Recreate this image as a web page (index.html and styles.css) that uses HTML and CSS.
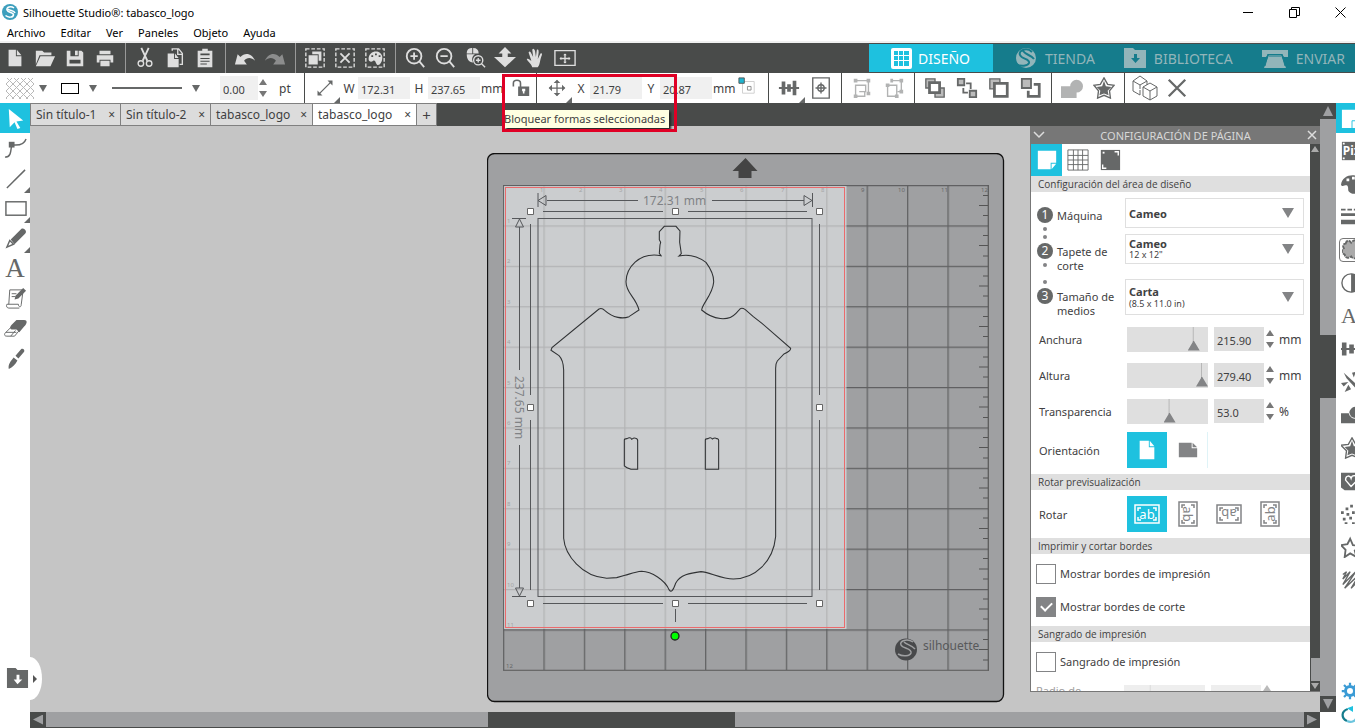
FILE: index.html
```html
<!DOCTYPE html>
<html lang="es">
<head>
    <meta charset="UTF-8">
    <meta name="viewport" content="width=device-width, initial-scale=1.0">
    <title>Silhouette Studio®: tabasco_logo</title>
    <link rel="stylesheet" href="styles.css">
</head>
<body>
    <header class="titlebar">
        <svg class="app-icon" viewBox="0 0 16 16"><circle cx="8" cy="8" r="8" fill="#3d9fbd"/><path d="M12 4C9 1.500 4 3 5 6s7 2 6.500 5c-.5 2.500-5 3-8 .5M6 5c2 2 6 1 7 4" fill="none" stroke="#fff" stroke-width="1.500"/></svg>
        <span class="app-title">Silhouette Studio®: tabasco_logo</span>
        <div class="window-buttons">
            <button aria-label="Minimizar"><svg viewBox="0 0 11 11"><path d="M0 5.500h10"/></svg></button>
            <button aria-label="Restaurar"><svg viewBox="0 0 11 11"><path d="M.5 2.500h7v8h-7zM2.500 2.500v-2h8v8h-3"/></svg></button>
            <button aria-label="Cerrar"><svg viewBox="0 0 11 11"><path d="M.5.500l10 10M10.500.500l-10 10"/></svg></button>
        </div>
    </header>

    <nav class="menubar">
        <a href="#">Archivo</a>
        <a href="#">Editar</a>
        <a href="#">Ver</a>
        <a href="#">Paneles</a>
        <a href="#">Objeto</a>
        <a href="#">Ayuda</a>
    </nav>

    <div class="toolbar">
        <div class="tool-group">
            <button aria-label="Nuevo"><svg viewBox="0 0 24 24"><path class="f" d="M5 3h8v7h6v11H5zM14 3l5 6h-5z"/></svg></button>
            <button aria-label="Abrir"><svg viewBox="0 0 24 24"><path class="f" d="M2 4h7l2 2h8v3H6L2 19zM7 10h16l-5 11H2z"/></svg></button>
            <button aria-label="Guardar"><svg viewBox="0 0 24 24"><path class="f" fill-rule="evenodd" d="M3 4h4v6h9V4h3l2 2v15H3zM6 14v4h12v-4z"/><path class="f" d="M12 4h3v5h-3z"/></svg></button>
            <button aria-label="Imprimir"><svg viewBox="0 0 24 24"><path class="f" d="M6 4h12v4H6zM3 9h18v8h-3v-3H6v3H3zM7 15h10v6H7z"/></svg></button>
        </div>
        <div class="tool-group">
            <button aria-label="Cortar"><svg viewBox="0 0 24 24"><path class="s" d="M8 1l6.500 14M16 1L9.500 15" stroke-width="2"/><circle class="s" cx="7.500" cy="18" r="3" stroke-width="1.500"/><circle class="s" cx="16.500" cy="18" r="3" stroke-width="1.500"/></svg></button>
            <button aria-label="Copiar"><svg viewBox="0 0 24 24"><path class="f" d="M4 7h7v6h5v9H4zM12 7l4 5h-4z"/><path class="s" d="M9 4V2h7l4 5v12h-3M15 2v6h5" stroke-width="1.500"/></svg></button>
            <button aria-label="Pegar"><svg viewBox="0 0 24 24"><path class="f" fill-rule="evenodd" d="M4 4h5V2h6v2h5v18H4zM7 7v2h10V7zM7 12v1h10v-1zM7 15v1h10v-1zM7 18v1h7v-1z"/></svg></button>
        </div>
        <div class="tool-group">
            <button aria-label="Deshacer"><svg viewBox="0 0 24 24"><path class="f" d="M1 19L4 8l3 3c5-6 13-4 16 4-4-4-9-4-12 0l3 4z"/></svg></button>
            <button class="dim" aria-label="Rehacer"><svg viewBox="0 0 24 24"><path class="f" d="M23 19L20 8l-3 3C12 5 4 7 1 15c4-4 9-4 12 0l-3 4z"/></svg></button>
        </div>
        <div class="tool-group">
            <button aria-label="Seleccionar todo"><svg viewBox="0 0 24 24"><rect class="s" x="2" y="2" width="20" height="20" stroke-width="1.500" stroke-dasharray="4 2"/><path class="f" d="M9 5h10v10h-3V8H9zM5 9h10v10H5z"/></svg></button>
            <button aria-label="Deseleccionar"><svg viewBox="0 0 24 24"><rect class="s" x="2" y="2" width="20" height="20" stroke-width="1.500" stroke-dasharray="4 2"/><path class="s" d="M7 7l10 10M17 7L7 17" stroke-width="2"/></svg></button>
            <button aria-label="Seleccionar por color"><svg viewBox="0 0 24 24"><rect class="s" x="2" y="2" width="20" height="20" stroke-width="1.500" stroke-dasharray="4 2"/><path class="f" d="M5 13c0-10 14-11 15-2 0 7-4 10-6 8s-1-5-4-4c-2 2-5 1-5-2z"/><path d="M8 9h2v2H8zM12 7h2v2h-2zM16 9h2v2h-2z" fill="#494b4a"/></svg></button>
        </div>
        <div class="tool-group">
            <button aria-label="Acercar"><svg viewBox="0 0 24 24"><circle class="s" cx="11" cy="10" r="8" stroke-width="2"/><path class="s" d="M7 10h8M11 6v8M17 16l5 6" stroke-width="2"/></svg></button>
            <button aria-label="Alejar"><svg viewBox="0 0 24 24"><circle class="s" cx="11" cy="10" r="8" stroke-width="2"/><path class="s" d="M7 10h8M17 16l5 6" stroke-width="2"/></svg></button>
            <button aria-label="Zoom de selección"><svg viewBox="0 0 24 24"><path class="f" d="M3 7c0-5 3-6 6-6v6zM10 1c4 0 6 2 6 6h-6zM3 8h9c-3 2-4 5-2 9-5 0-7-4-7-9z"/><circle class="s" cx="15.500" cy="14.500" r="5" stroke-width="1.500"/><path class="s" d="M13 14.500h5M15.500 12v5M19 18l4 4" stroke-width="1.500"/></svg></button>
            <button aria-label="Arrastrar zoom"><svg viewBox="0 0 24 24"><path class="f" d="M12 0l7 7h-4v4h9L12 22 0 11h9V7H5z"/></svg></button>
            <button aria-label="Mano"><svg viewBox="0 0 24 24"><path class="f" d="M9 22c-1-4-5-6-6-9 2-1 3 1 5 2L5 6c1-2 2-1 3 1l2 4-1-8c1-2 2-1 3 1l1 7 1-8c2-1 2 1 2 3l-1 7 3-6c2-1 2 1 1 3-2 5-1 8-4 12z"/></svg></button>
            <button aria-label="Ajustar a ventana"><svg viewBox="0 0 24 24"><path class="s" d="M1 4h22v16H1zM7 12.500h10M12 7.500v10" stroke-width="1.500"/><path class="f" d="M6 12.500l2-2v4zM18 12.500l-2-2v4zM12 7l-2 2h4zM12 18l-2-2h4z"/></svg></button>
        </div>
        <nav class="mode-tabs">
            <a class="active" href="#"><svg viewBox="0 0 24 24"><rect x="2" y="2" width="21" height="21" rx="2" fill="#fff"/><path d="M5 5h4v4H5zM10 5h4v4h-4zM15 5h5v4h-5zM5 10h4v4H5zM10 10h4v4h-4zM15 10h5v4h-5zM5 15h4v5H5zM10 15h4v5h-4zM15 15h5v5h-5z" fill="#1ec1df"/></svg>DISEÑO</a>
            <a href="#"><svg viewBox="0 0 24 24"><circle class="f" cx="12" cy="12" r="10"/><path d="M18 6C13 1 4 4 6 9s10 3 9 8c-1 3-8 4-13 1M9 5c3 4 8 4 11 8" fill="none" stroke="#157c8c" stroke-width="2"/></svg>TIENDA</a>
            <a class="wide" href="#"><svg viewBox="0 0 24 24"><path class="f" d="M1 2h9l2 2h11v18H1z"/><path d="M11 8h3v4h3l-4.500 5L8 12h3z" fill="#157c8c"/></svg>BIBLIOTECA</a>
            <a class="wide send" href="#"><svg viewBox="0 0 28 24"><path class="f" d="M1 4h26v7h-4l-2-3H7l-2 3H1zM8 9h12l5 13H3z"/><path d="M7 8L4 20M21 8l3 12M8 10h12" fill="none" stroke="#157c8c"/></svg>ENVIAR</a>
        </nav>
    </div>

    <div class="optionsbar">
        <div class="opt-group line-style">
            <span class="hatch"></span><i class="caret"></i>
            <span class="swatch"></span><i class="caret"></i>
            <span class="line-sample"></span><i class="caret"></i>
            <input class="num thick" value="0.00" aria-label="Grosor">
            <span class="spin"><button aria-label="Más"></button><button aria-label="Menos"></button></span>
            <span class="unit">pt</span>
        </div>
        <div class="opt-group size">
            <span class="cell more"><svg class="ic" viewBox="0 0 24 24"><path class="s" d="M5 19L19 5" stroke-width="1.500"/><path class="f" d="M3 21v-6l6 6zM21 3h-6l6 6z"/></svg></span>
            <label for="w">W</label><input class="num" id="w" value="172.31">
            <label for="h">H</label><input class="num" id="h" value="237.65">
            <span class="unit">mm</span>
            <button class="lock" aria-label="Bloquear formas seleccionadas"><svg class="ic" viewBox="0 0 24 24"><path class="s" d="M3 10V6c0-5 9-5 9 0v5" stroke-width="2"/><path class="f" fill-rule="evenodd" d="M9 10h14v12H9zM14 13v3h1v3h2v-3h1v-3z"/></svg></button>
            <div class="tooltip">Bloquear formas seleccionadas</div>
            <div class="highlight"></div>
        </div>
        <div class="opt-group position">
            <span class="cell more"><svg class="ic" viewBox="0 0 24 24"><path class="s" d="M3 12h18M12 3v18" stroke-width="1.500"/><path class="f" d="M2 12l4-4v8zM22 12l-4-4v8zM12 2L8 6h8zM12 22l-4-4h8z"/></svg></span>
            <label for="x">X</label><input class="num" id="x" value="21.79">
            <label for="y">Y</label><input class="num" id="y" value="20.87">
            <span class="unit">mm</span>
            <svg class="ic anchor" viewBox="0 0 20 20"><path d="M5 5h13v13H5z" fill="none" stroke="#ccc"/><path d="M10.500 10.500h4v4h-4z" fill="none" stroke="#888"/><path d="M1 1h6v6H1z" fill="#1eb5d0" stroke="#555"/></svg>
        </div>
        <div class="opt-group">
            <button class="more" aria-label="Alinear"><svg viewBox="0 0 24 24"><path class="f" d="M1 11h22v2H1zM4 5h4v14H4zM10 8h4v8h-4zM16 4h4v16h-4z"/></svg></button>
            <button aria-label="Centrar en la página"><svg viewBox="0 0 24 24"><path class="s" d="M3 1h18v22H3zM6 12h12M12 6v12" stroke-width="1.500"/><circle class="s" cx="12" cy="12" r="3.500" stroke-width="1.500"/></svg></button>
        </div>
        <div class="opt-group">
            <button class="dim" aria-label="Agrupar"><svg viewBox="0 0 24 24"><path class="s" d="M5 4h14v14M9 9h-4v12h10v-5M9 9h7v7H9" stroke-width="1.500"/><path class="f" d="M3 2h4v4H3zM17 2h4v4h-4zM17 16h4v4h-4zM3 19h4v4H3z"/></svg></button>
            <button class="dim" aria-label="Desagrupar"><svg viewBox="0 0 24 24"><path class="s" d="M9 4h11v12h-4M5 9h10v12H5z" stroke-width="1.500"/><path class="f" d="M8 2h3v4H8zM18 2h4v4h-4zM18 14h4v4h-4zM3 7h4v4H3zM13 19h4v4h-4z"/></svg></button>
        </div>
        <div class="opt-group">
            <button aria-label="Traer al frente"><svg viewBox="0 0 24 24"><path d="M2 2h10v10H2zM12 12h10v10H12z" fill="#bbb" stroke="#666868" stroke-width="1.500"/><path d="M6 6h11v11H6z" fill="#fff" stroke="#666868" stroke-width="3"/></svg></button>
            <button aria-label="Enviar al fondo"><svg viewBox="0 0 24 24"><path d="M2 2h7v7H2zM15 15h7v7h-7z" fill="#bbb" stroke="#666868" stroke-width="2"/><path class="s" d="M11 7h5v6M8 12v5h5" stroke-width="2"/></svg></button>
            <button aria-label="Adelante"><svg viewBox="0 0 24 24"><path d="M2 2h11v11H2z" fill="#bbb" stroke="#666868" stroke-width="1.500"/><path d="M7 7h14v14H7z" fill="#fff" stroke="#666868" stroke-width="3"/></svg></button>
            <button aria-label="Atrás"><svg viewBox="0 0 24 24"><path class="s" d="M15 8h6v13H9v-6" stroke-width="3"/><path d="M2 2h10v10H2z" fill="#bbb" stroke="#666868" stroke-width="2"/></svg></button>
        </div>
        <div class="opt-group">
            <button class="dim" aria-label="Soldar"><svg viewBox="0 0 24 24"><path class="f" d="M0 10h10a7 7 0 1 1 7 7v6H0z"/></svg></button>
            <button aria-label="Modificar"><svg viewBox="0 0 24 24"><path class="s" d="M12 1l4 7 7 1-5 6 1 8-7-3-7 3 1-8-5-6 7-1z" stroke-width="1.500"/><path class="f" d="M12 4l2 6 6 1-4 4 1 5-5-2-5 2 1-5-4-4 6-1z"/></svg></button>
        </div>
        <div class="opt-group last">
            <button class="big" aria-label="Replicar"><svg viewBox="0 0 26 26"><path class="s" d="M1 6l7-5 7 5v4M1 6v10l7 4v-5M1 6l7 4 7-4M8 10v4M11 12l7-4 7 4v9l-7 4-7-4zM11 12l7 4 7-4M18 16v9"/></svg></button>
            <button aria-label="Eliminar"><svg viewBox="0 0 24 24"><path class="s" d="M3 3l18 18M21 3L3 21" stroke-width="2.500"/></svg></button>
        </div>
    </div>

    <main class="workspace">
        <aside class="left-tools">
            <button class="active" aria-label="Seleccionar"><svg viewBox="0 0 24 24"><path d="M5 2l15 12-7 1 4 7-3 1-3-7-5 5z" fill="#fff"/></svg></button>
            <button aria-label="Editar puntos"><svg viewBox="0 0 24 24"><path class="s" d="M1 21c6 0 6-5 7-13 7 1 13 0 15-6" stroke-width="1.500"/><path class="f" d="M5 5h6v6H5z"/></svg></button>
            <button class="more" aria-label="Línea"><svg viewBox="0 0 24 24"><path class="s" d="M3 22L22 3" stroke-width="1.500"/></svg></button>
            <button class="more" aria-label="Rectángulo"><svg viewBox="0 0 24 24"><rect class="s" x="2" y="5" width="21" height="14" stroke-width="1.500"/></svg></button>
            <button class="more" aria-label="Lápiz"><svg viewBox="0 0 24 24"><path class="f" d="M7 13L18 2c2-2 7 2 4 5L11 18z"/><path class="s" d="M6 14l4 4-7 3z" stroke-width="1.500"/></svg></button>
            <button class="letter" aria-label="Texto">A</button>
            <button aria-label="Dibujo"><svg viewBox="0 0 24 24"><path class="s" d="M6 3h14l-2 15c0 4-3 3-3 0H3c-1 2 0 4 2 4h11M6 3L5 18M8 7h5M8 10h4"/><path class="f" d="M11 13l1-4 8-8 3 3-8 8z"/></svg></button>
            <button aria-label="Borrador"><svg viewBox="0 0 24 24"><path class="s" d="M1 17l9-9 6 6-5 6H3c-2 0-3-1-2-3zM2 16h11M7 20l5-6"/><path class="f" d="M8 8l5-5h8c4 0 3 4 0 7l-5 6-3-3H8c-2 0-2-3 0-5z"/></svg></button>
            <button aria-label="Cuchilla"><svg viewBox="0 0 24 24"><path class="f" d="M12 9l6-7c2-1 4 1 3 3l-6 7zM10 11l4 3c-2 4-5 7-9 9-1-5 2-8 5-12z"/></svg></button>
            <button class="library" aria-label="Biblioteca"><svg viewBox="0 0 24 24"><path class="f" fill-rule="evenodd" d="M1 1h9l2 2h11v19H1zM11 8v5H8l4 5 5-5h-3V8z"/></svg><i></i></button>
        </aside>

        <section class="editor">
            <div class="doc-tabs">
                <a href="#">Sin título-1<b>×</b></a>
                <a href="#">Sin título-2<b>×</b></a>
                <a class="long" href="#">tabasco_logo<b>×</b></a>
                <a class="long active" href="#">tabasco_logo<b>×</b></a>
                <button aria-label="Nueva pestaña">+</button>
            </div>
            <div class="canvas">
                <div class="mat-area">
                    <svg class="mat" viewBox="487 153 518 550">
                        <defs>
                            <pattern id="grid" x="503" y="185" width="40.400" height="40.400" patternUnits="userSpaceOnUse">
                                <path d="M.7 0v40.400M0 .7h40.400" fill="none" stroke="#000" stroke-opacity=".4" stroke-width="1.200"/>
                            </pattern>
                        </defs>
                        <rect x="487.500" y="153.500" width="516" height="548" rx="7" fill="#9fa0a2" stroke="#111" stroke-width="1.300"/>
                        <path d="M745.500 158l12 13h-6v7h-13v-7h-6z" fill="#444"/>
                        <rect x="503" y="185" width="485.500" height="485.500" fill="url(#grid)"/>
                        <path d="M988.300 185v486" stroke="#555"/>
                        <path d="M503 670.400h485.500" stroke="#666"/>
                        <path d="M983 195.500h5M979 205.500h9M983 215.500h5M983 235.500h5M979 245.500h9M983 256h5M983 276h5M979 286h9M983 296h5M983 316.500h5M979 326.500h9M983 336.500h5M983 357h5M979 367h9M983 377h5M983 397h5M979 407h9M983 417.500h5M983 437.500h5M979 447.500h9M983 458h5M983 478h5M979 488h9M983 498h5M983 518h5M979 528.500h9M983 538.500h5M983 558.500h5M979 569h9M983 579h5M983 599h5M979 609h9M983 619h5M983 639.500h5M979 649.500h9M983 660h5" stroke="#555"/>
                        <g class="ruler">
                            <text x="861" y="192">9</text><text x="898" y="192">10</text><text x="941" y="192">11</text><text x="981" y="192">12</text>
                            <text x="506" y="668">12</text>
                        </g>
                        <rect x="504" y="186" width="342.500" height="443" fill="#eaebed" fill-opacity=".6"/>
                        <rect x="505.500" y="187.500" width="339" height="440" fill="none" stroke="#ea6a6c"/>
                        <g class="ruler faint">
                            <text x="540" y="192">1</text><text x="579" y="192">2</text><text x="619" y="192">3</text><text x="659" y="192">4</text><text x="700" y="192">5</text><text x="740" y="192">6</text><text x="781" y="192">7</text><text x="821" y="192">8</text>
                            <text x="507" y="223">1</text><text x="507" y="263">2</text><text x="507" y="304">3</text><text x="507" y="344">4</text><text x="507" y="385">5</text><text x="507" y="425">6</text><text x="507" y="465">7</text><text x="507" y="506">8</text><text x="507" y="546">9</text><text x="507" y="587">10</text><text x="507" y="627">11</text>
                        </g>
                        <!-- caja de selección y cotas -->
                        <rect x="538" y="218.500" width="274" height="378" fill="none" stroke="#55575a"/>
                        <g fill="none" stroke="#55575a">
                            <path d="M538 193v14M812.500 193v14M547 200.500h91M712 200.500h92M538 200.500l8-5v10zM812 200.500l-8-5v10z"/>
                            <path d="M512 218.500h14M512 596.500h14M519.500 227v143M519.500 445v143M519.500 219l-4 8h8zM519.500 596l-4-8h8z"/>
                            <path d="M543 211.500h120M688 211.500h119M543 603.500h120M688 603.500h119M530.500 224v171M530.500 420v170M819.500 224v171M819.500 420v170M675.500 609v13"/>
                        </g>
                        <text class="dim-text" x="643" y="205">172.31 mm</text>
                        <text class="dim-text" transform="translate(515 376) rotate(90)">237.65 mm</text>
                        <!-- escudo -->
                        <g transform="translate(480 145) scale(.3333)" fill="none" stroke="#303234" stroke-width="3.200">
                            <path d="M543 332L538 325 540 300 542 292 538 284V260L553 244H588L600 258 599 292 604 326 597 333C630 326 655 335 678 352C695 375 702 395 701 412C698 450 667 475 665 495C700 525 745 530 768 505L781 491Q787 488 796 494L820 515 846 535 932 610Q933 618 912 627L892 648Q887 655 887 670V1175C880 1250 825 1302 760 1302C725 1302 685 1280 663 1280C630 1284 600 1290 587 1315C580 1335 574 1345 567 1334C555 1305 515 1280 485 1279C465 1281 450 1287 435 1291L410 1298 380 1300C305 1295 255 1230 251 1180V675Q250 645 237 632L213 616 216 608 357 492Q366 488 374 496C400 520 430 522 447 515L477 495C467 455 438 445 438 410C439 370 475 320 543 332Z"/>
                            <path d="M433 963V885q0-4 8-4 10-6 14 2 8-6 12-3 7 2 6 8v85h-20q-14-4-20-10zM676 973V885q0-4 8-4 8-6 13 1 8-5 13-1 7 0 6 8v84z"/>
                        </g>
                        <g fill="#fff" stroke="#666">
                            <path d="M527.500 208.500h6v6h-6zM672.500 208.500h6v6h-6zM816.500 208.500h6v6h-6zM527.500 404.500h6v6h-6zM816.500 404.500h6v6h-6zM527.500 600.500h6v6h-6zM672.500 600.500h6v6h-6zM816.500 600.500h6v6h-6z"/>
                        </g>
                        <circle cx="675" cy="636" r="4" fill="#0f0" stroke="#222" stroke-width="1.300"/>
                        <circle cx="906" cy="649.500" r="11" fill="#48494b"/>
                        <path d="M913 642c-6-4-14-1-12 3s11 3 10 8c-1 3-8 4-13 1M904 642c3 3 8 3 11 7" fill="none" stroke="#9fa0a2" stroke-width="1.500"/>
                        <text class="brand" x="923" y="650">silhouette</text>
                    </svg>
                </div>

                <aside class="panel">
                    <h2><svg viewBox="0 0 12 12"><path d="M1 3l5 5 5-5"/></svg>CONFIGURACIÓN DE PÁGINA<svg viewBox="0 0 12 12"><path d="M2 2l8 8M10 2l-8 8"/></svg></h2>
                    <div class="panel-main">
                        <div class="panel-content">
                            <div class="panel-tabs">
                                <button class="active" aria-label="Página"><svg viewBox="0 0 24 24"><path d="M2 2h20v13h-6v7H2zM17 22v-6h5z" fill="#fff"/></svg></button>
                                <button aria-label="Cuadrícula"><svg viewBox="0 0 24 24"><path class="s" d="M1 1h22v22H1zM1 7h22M1 12h22M1 17h22M7 1v22M12 1v22M17 1v22"/></svg></button>
                                <button aria-label="Marcas de registro"><svg viewBox="0 0 24 24"><path class="f" d="M2 1h21v22H2z"/><path d="M4 3h2v2H4z" fill="#fff"/><path d="M17 3h4v4M4 17v4h4" fill="none" stroke="#fff" stroke-width="1.500"/></svg></button>
                            </div>
                            <h3>Configuración del área de diseño</h3>
                            <div class="device">
                                <div class="device-row">
                                    <span class="step">1</span>
                                    <label for="machine">Máquina</label>
                                    <div class="select"><select id="machine"><option>Cameo</option></select></div>
                                </div>
                                <div class="device-row linked">
                                    <span class="step">2</span>
                                    <label for="matsize">Tapete de corte</label>
                                    <div class="select two"><select id="matsize"><option>Cameo</option></select><small>12 x 12"</small></div>
                                </div>
                                <div class="device-row linked tall">
                                    <span class="step">3</span>
                                    <label for="media">Tamaño de medios</label>
                                    <div class="select two"><select id="media"><option>Carta</option></select><small>(8.5 x 11.0 in)</small></div>
                                </div>
                            </div>
                            <div class="field">
                                <label for="width">Anchura</label>
                                <input type="range" value="88" aria-label="Anchura">
                                <input class="num" id="width" value="215.90">
                                <span class="spin"><button aria-label="Más"></button><button aria-label="Menos"></button></span>
                                <span class="unit">mm</span>
                            </div>
                            <div class="field">
                                <label for="height">Altura</label>
                                <input type="range" value="100" aria-label="Altura">
                                <input class="num" id="height" value="279.40">
                                <span class="spin"><button aria-label="Más"></button><button aria-label="Menos"></button></span>
                                <span class="unit">mm</span>
                            </div>
                            <div class="field">
                                <label for="alpha">Transparencia</label>
                                <input type="range" value="53" aria-label="Transparencia">
                                <input class="num" id="alpha" value="53.0">
                                <span class="spin"><button aria-label="Más"></button><button aria-label="Menos"></button></span>
                                <span class="unit">%</span>
                            </div>
                            <div class="choices orient">
                                <span>Orientación</span>
                                <button class="active" aria-label="Vertical"><svg viewBox="0 0 24 24"><path d="M4 2h10v7h6v13H4zM15 2l5 6h-5z" fill="#fff"/></svg></button>
                                <button class="edge" aria-label="Horizontal"><svg viewBox="0 0 24 24"><path d="M2 4h14v6h6v10H2zM17 4l5 5h-5z" fill="#838486"/></svg></button>
                            </div>
                            <h3>Rotar previsualización</h3>
                            <div class="choices">
                                <span>Rotar</span>
                                <button class="active rot" aria-label="0 grados"><svg viewBox="0 0 26 20"><path d="M1 1h24v18H1zM4 7V4h3M19 4h3v3M4 13v3h3M19 16h3v-3"/><text x="13" y="15">ab</text></svg></button>
                                <button class="rot r90" aria-label="90 grados"><svg viewBox="0 0 26 20"><path d="M1 1h24v18H1zM4 7V4h3M19 4h3v3M4 13v3h3M19 16h3v-3"/><text x="13" y="15">ab</text></svg></button>
                                <button class="rot r180" aria-label="180 grados"><svg viewBox="0 0 26 20"><path d="M1 1h24v18H1zM4 7V4h3M19 4h3v3M4 13v3h3M19 16h3v-3"/><text x="13" y="15">ab</text></svg></button>
                                <button class="rot r270" aria-label="270 grados"><svg viewBox="0 0 26 20"><path d="M1 1h24v18H1zM4 7V4h3M19 4h3v3M4 13v3h3M19 16h3v-3"/><text x="13" y="15">ab</text></svg></button>
                            </div>
                            <h3>Imprimir y cortar bordes</h3>
                            <div class="checks">
                                <label><input type="checkbox">Mostrar bordes de impresión</label>
                                <label><input type="checkbox" checked>Mostrar bordes de corte</label>
                            </div>
                            <h3>Sangrado de impresión</h3>
                            <div class="checks">
                                <label><input type="checkbox">Sangrado de impresión</label>
                            </div>
                            <div class="field disabled">
                                <label for="radius">Radio de</label>
                                <input type="range" value="30" disabled aria-label="Radio de sangrado">
                                <input class="num" id="radius" disabled>
                                <span class="spin"><button disabled aria-label="Más"></button><button disabled aria-label="Menos"></button></span>
                            </div>
                        </div>
                        <div class="panel-scroll"><i class="up"></i><b></b><i class="down"></i></div>
                    </div>
                </aside>
            </div>
            <div class="hscroll"><i class="left"></i><b></b><i class="right"></i></div>
        </section>

        <div class="vscroll"><i class="up"></i><b></b><i class="down"></i></div>

        <aside class="right-icons">
            <button class="active" aria-label="Configuración de página"><svg viewBox="0 0 24 24"><path d="M1 3h22v13h-6v7H1z" fill="#fff"/><path d="M12 23v-8h11" fill="none" stroke="#1ec1df"/></svg></button>
            <button class="pix" aria-label="PixScan"><svg viewBox="0 0 24 24"><path class="f" d="M1 2h22v20H1z"/><path d="M2 3h2v2H2zM2 19h2v2H2z" fill="#fff"/><text x="2" y="16">Pix</text></svg></button>
            <button aria-label="Relleno"><svg viewBox="0 0 24 24"><path class="f" fill-rule="evenodd" d="M0 13C1-1 24-1 23 12c0 9-7 12-12 10s-2-5-4-8c-2-2-5 2-7-1zM6 6h3v3H6zM12 4h3v3h-3z"/></svg></button>
            <button aria-label="Línea"><svg viewBox="0 0 24 24"><path class="f" d="M0 3h5v2H0zM7 3h5v2H7zM14 3h5v2h-5zM0 8h24v3H0zM0 15h24v5H0z"/></svg></button>
            <button class="boxed" aria-label="Calco"><svg viewBox="0 0 24 24"><path d="M4 5c1-4 4-4 6-1 3-4 7-3 8 0 4 0 5 3 3 6 3 4 0 8-3 8-2 4-6 4-8 1-4 3-7 1-7-2-4-2-4-5-1-7-2-3 0-5 2-5z" fill="#aaa" stroke="#666868" stroke-width="2" stroke-dasharray="4 1"/></svg></button>
            <button aria-label="Contraste"><svg viewBox="0 0 24 24"><circle class="s" cx="11" cy="12" r="10" stroke-width="1.500"/><path class="f" d="M11 2a10 10 0 0 1 0 20z"/></svg></button>
            <button class="letter" aria-label="Estilo de texto">A</button>
            <button aria-label="Alinear"><svg viewBox="0 0 24 24"><path class="f" d="M0 11h24v2H0zM1 5h5v14H1zM9 7h5v10H9z"/></svg></button>
            <button aria-label="Replicar"><svg viewBox="0 0 24 24"><path class="f" d="M3 2l19 17-3 3L6 8zM0 13l8-1-5 5zM12 2l4-1-2 6zM4 23l4-8 3 5z"/></svg></button>
            <button aria-label="Modificar"><svg viewBox="0 0 24 24"><path class="f" d="M0 10h9a7 7 0 0 1 14 0v11H0z"/><path d="M9 10c1 6 6 6 13 6" fill="none" stroke="#fff"/></svg></button>
            <button aria-label="Desplazamiento"><svg viewBox="0 0 24 24"><path class="s" d="M12 1l4 7 8 1-6 6 1 8-7-3-7 3 1-8-6-6 8-1z" stroke-width="1.500"/><path class="f" d="M12 4l2 6 6 1-4 4 1 5-5-2-5 2 1-5-4-4 6-1z"/></svg></button>
            <button aria-label="Pedrería"><svg viewBox="0 0 24 24"><path class="f" d="M0 3h24v16l-3 3H4l-4-3z"/><path d="M11 18L5 11c0-6 5-5 6-2 1-4 8-4 7 2z" fill="none" stroke="#fff" stroke-width="1.500"/></svg></button>
            <button aria-label="Puntos"><svg viewBox="0 0 24 24"><path class="f" d="M0 9h3v3H0zM5 5h3v3H5zM10 2h3v3h-3zM6 11h3v3H6zM12 9h3v3h-3zM2 16h3v3H2zM9 15h3v3H9zM4 21h3v2H4zM12 21h3v2h-3z"/></svg></button>
            <button aria-label="Estrella"><svg viewBox="0 0 24 24"><path class="s" d="M10 3l3 7 9 1-7 5 2 7-7-4-6 4 1-8-5-5 7-1z" stroke-width="2"/></svg></button>
            <button aria-label="Boceto"><svg viewBox="0 0 24 24"><path class="s" d="M2 6l4-3-4 8 8-8-8 14L16 3 4 21 20 6l-9 15 10-10" stroke-width="1.500"/></svg></button>
            <div class="bottom">
                <button class="blue" aria-label="Preferencias"><svg viewBox="0 0 24 24"><circle class="s" cx="12" cy="12" r="6" stroke-width="4"/><path class="s" d="M12 1v4M12 19v4M1 12h4M19 12h4M4 4l3 3M17 17l3 3M4 20l3-3M17 7l3-3" stroke-width="3"/></svg></button>
                <button class="sync" aria-label="Sincronizar"><svg viewBox="0 0 24 24"><path class="s" d="M8 20C0 16 0 7 9 4" stroke-width="3"/><path d="M8 3l8-3v8z" fill="#1ec1df"/><path d="M8 20c6 3 12 0 13-6" fill="none" stroke="#6cc5de" stroke-width="3"/></svg></button>
            </div>
        </aside>
    </main>
</body>
</html>
```

FILE: styles.css
```css
* {
    box-sizing: border-box;
}

body {
    margin: 0;
    height: 100vh;
    display: flex;
    flex-direction: column;
    overflow: hidden;
    background: #fff;
    color: #3f4142;
    font-family: "Noto Sans", "Open Sans", sans-serif;
    font-size: 11px;
}

button {
    display: flex;
    align-items: center;
    justify-content: center;
    padding: 0;
    border: none;
    background: none;
    color: inherit;
    font: inherit;
}

a {
    color: inherit;
    text-decoration: none;
}

input,
select {
    margin: 0;
    font: inherit;
    color: inherit;
    border: none;
    border-radius: 0;
    min-width: 0;
}

svg {
    display: block;
    flex: none;
}

.f {
    fill: currentColor;
}

.s {
    fill: none;
    stroke: currentColor;
}

/* title and menu */
.titlebar {
    display: flex;
    align-items: center;
    height: 24px;
    padding-left: 2px;
    color: #000;
}

.app-icon {
    width: 16px;
    height: 16px;
    margin-right: 5px;
}

.window-buttons {
    display: flex;
    height: 20px;
    margin: 0 -8px 0 auto;
}

.window-buttons button {
    width: 46px;
}

.window-buttons svg {
    width: 11px;
    height: 11px;
    fill: none;
    stroke: #000;
}

.menubar {
    display: flex;
    gap: 15px;
    height: 19px;
    padding-left: 7px;
    line-height: 17px;
    color: #000;
    border-bottom: 2px solid #f0f0f0;
}

/* dark toolbar */
.toolbar {
    display: flex;
    height: 30px;
    background: #494b4a;
    color: #dedede;
}

.tool-group {
    display: flex;
}

.tool-group + .tool-group {
    margin-left: 5px;
    padding-left: 4px;
    border-left: 1px solid #999;
}

.tool-group button {
    width: 30px;
}

.tool-group svg {
    width: 22px;
    height: 22px;
}

.tool-group .dim {
    color: #8c8d8d;
}

.mode-tabs {
    display: flex;
    margin: 1px 0 1px auto;
    background: #157c8c;
    color: #92b5ba;
    font-size: 14px;
    padding-right: 10px;
}

.mode-tabs a {
    display: flex;
    align-items: center;
    gap: 7px;
    padding-left: 21px;
}

.mode-tabs .wide {
    padding-left: 28px;
}

.mode-tabs svg {
    width: 24px;
    height: 24px;
}

.mode-tabs .send svg {
    width: 28px;
}

.mode-tabs .active {
    width: 124px;
    padding-left: 20px;
    gap: 5px;
    background: #1ec1df;
    color: #fff;
}

/* options bar */
.optionsbar {
    display: flex;
    height: 30px;
    color: #666868;
}

.opt-group {
    display: flex;
    align-items: center;
    padding: 0 4px;
    border-right: 1px solid #494b4a;
}

.opt-group button {
    width: 32px;
    height: 30px;
}

.opt-group svg {
    width: 22px;
    height: 22px;
}

.opt-group .big svg {
    width: 26px;
    height: 26px;
}

.opt-group.last {
    border: none;
}

.opt-group .dim {
    color: #b2b3b3;
}

.more {
    position: relative;
}

.more::after {
    content: "";
    position: absolute;
    right: 0;
    bottom: 0;
    border-left: 6px solid transparent;
    border-bottom: 6px solid #666868;
}

.line-style {
    width: 305px;
    padding: 0 0 0 6px;
}

.hatch {
    width: 28px;
    height: 21px;
    background:
        repeating-linear-gradient(45deg, #b9b9b9 0 1px, transparent 1px 5px),
        repeating-linear-gradient(-45deg, #b9b9b9 0 1px, transparent 1px 5px);
}

.caret {
    margin-left: 5px;
    border: 4px solid transparent;
    border-top: 7px solid #666868;
    border-bottom: none;
}

.swatch {
    width: 18px;
    height: 11px;
    margin-left: 14px;
    border: 1px solid #000;
}

.swatch + .caret,
.line-sample + .caret {
    margin-left: 10px;
}

.line-sample {
    width: 70px;
    height: 2px;
    margin-left: 15px;
    background: #666868;
}

.num {
    width: 52px;
    height: 24px;
    padding: 3px 3px 0;
    background: #f0f0f0;
    color: #3f4142;
}

.num.thick {
    width: 38px;
    margin-left: 20px;
}

.opt-group .num {
    height: 22px;
}

.opt-group .num.thick {
    height: 24px;
}

.spin {
    display: flex;
    flex-direction: column;
    gap: 6px;
    margin-left: 1px;
}

.spin button {
    width: 0;
    height: 0;
    border: 4px solid transparent;
    border-top: none;
    border-bottom: 6px solid #777;
}

.spin button + button {
    border-bottom: none;
    border-top: 6px solid #777;
}

.unit {
    color: #3f4142;
    font-size: 12px;
}

.line-style .unit {
    margin-left: 12px;
}

.opt-group label {
    width: 18px;
    text-align: center;
    color: #3f4142;
    font-size: 12px;
}

.size,
.position {
    position: relative;
    width: 232px;
    padding: 0 0 0 5px;
}

.cell {
    display: flex;
    align-items: center;
    justify-content: center;
    width: 30px;
    height: 30px;
}

.cell svg.ic {
    width: 20px;
    height: 20px;
}

.size .lock {
    width: 32px;
}

.size .lock svg.ic {
    width: 19px;
    height: 20px;
}

.size .unit,
.position .unit {
    width: 24px;
    padding-left: 1px;
}

.position svg.anchor {
    margin: 0 0 4px 2px;
    width: 18px;
    height: 18px;
}

.tooltip {
    position: absolute;
    left: 199px;
    top: 37px;
    width: 165px;
    height: 18px;
    line-height: 17px;
    background: #ffffe1;
    color: #3f4142;
    white-space: nowrap;
    box-shadow: 2px 2px 2px #222;
    z-index: 2;
}

.highlight {
    position: absolute;
    left: 197px;
    top: 1px;
    width: 175px;
    height: 58px;
    border: 3px solid #e00025;
    z-index: 3;
}

/* workspace */
.workspace {
    flex: 1;
    display: flex;
    min-height: 0;
}

.left-tools {
    position: relative;
    width: 30px;
    display: flex;
    flex-direction: column;
    color: #666868;
    z-index: 2;
}

.left-tools button {
    width: 30px;
    height: 30px;
}

.left-tools svg {
    width: 23px;
    height: 23px;
}

.left-tools .active,
.right-icons .active {
    background: #1ec1df;
}

.left-tools .letter {
    font: 27px/28px "Liberation Serif", serif;
}

.right-icons .letter {
    font: 22px/28px "Liberation Serif", serif;
}

.left-tools .library {
    gap: 4px;
    width: 42px;
    height: 43px;
    margin: auto 0 28px;
    background: #fff;
    border-radius: 0 12px 12px 0 / 0 22px 22px 0;
}

.library i {
    border: 4px solid transparent;
    border-left-color: #555;
    border-right: none;
}

.editor {
    flex: 1;
    min-width: 0;
    display: flex;
    flex-direction: column;
}

.doc-tabs {
    display: flex;
    height: 23px;
    background: #494b4a;
    font-size: 12px;
}

.doc-tabs a {
    display: flex;
    justify-content: space-between;
    width: 90px;
    padding: 0 5px;
    line-height: 21px;
    border: 1px solid #808080;
    border-right: none;
    background: #dcdcdc;
}

.doc-tabs .long {
    width: 102px;
}

.doc-tabs .active {
    width: 104px;
    background: #fff;
}

.doc-tabs b {
    font-weight: normal;
}

.doc-tabs button {
    width: 21px;
    border: 1px solid #808080;
    background: #dcdcdc;
    font-size: 15px;
}

.canvas {
    flex: 1;
    min-height: 0;
    display: flex;
    align-items: flex-start;
    background: #c5c5c5;
}

.mat-area {
    flex: 1;
    display: flex;
    justify-content: flex-end;
    padding: 27px 25px 0 0;
}

.mat {
    width: 518px;
    height: 550px;
}

.mat text {
    fill: #808285;
}

.mat .dim-text {
    font-size: 12px;
}

.mat .ruler text {
    font-size: 6px;
    fill: #666;
}

.mat .faint text {
    fill: #a4a4a4;
}

.mat .brand {
    font-size: 12px;
    fill: #58595b;
}

/* page setup panel */
.panel {
    width: 290px;
    height: 566px;
    display: flex;
    flex-direction: column;
    border: 1px solid #777;
    border-top: none;
    border-right: none;
    background: #fff;
}

.panel h2 {
    display: flex;
    flex: none;
    align-items: center;
    justify-content: space-between;
    height: 18px;
    margin: 0;
    padding: 0 2px;
    background: #777;
    color: #d8d8d8;
    font-size: 11px;
    font-weight: normal;
}

.panel h2 svg {
    width: 12px;
    height: 12px;
    fill: none;
    stroke: #ddd;
    stroke-width: 1.5;
}

.panel-main {
    flex: 1;
    display: flex;
    min-height: 0;
}

.panel-content {
    flex: 1;
    overflow: hidden;
}

.panel-scroll {
    width: 10px;
    display: flex;
    flex-direction: column;
    align-items: center;
    padding: 2px 0;
    background: #494b4a;
}

.panel-scroll b {
    width: 9px;
    height: 23px;
    margin: auto 0 2px;
    background: #9fa0a2;
}

.panel-scroll i {
    border: 4px solid transparent;
}

.panel-scroll .up {
    border-top: none;
    border-bottom: 6px solid #aaa;
}

.panel-scroll .down {
    border-bottom: none;
    border-top: 6px solid #aaa;
}

.panel-tabs {
    display: flex;
    height: 32px;
    color: #666868;
}

.panel-tabs button {
    width: 32px;
}

.panel-tabs .active {
    width: 31px;
}

.panel-tabs svg {
    width: 22px;
    height: 22px;
}

.panel .active {
    background: #1ec1df;
    color: #fff;
}

.panel h3 {
    height: 16px;
    margin: 0;
    padding-left: 7px;
    background: #dfdfdf;
    font-family: "Open Sans", "Noto Sans", sans-serif;
    font-size: 10px;
    line-height: 16px;
    font-weight: normal;
}

.device {
    padding: 6px 6px 0;
}

.device-row {
    display: grid;
    grid-template-columns: 20px 68px 1fr;
    height: 36px;
}

.device-row label {
    padding-top: 11px;
    line-height: 14px;
}

.device-row.linked {
    position: relative;
    height: 45px;
}

.linked::before,
.linked::after {
    content: "";
    position: absolute;
    left: 6px;
    width: 4px;
    height: 4px;
    border-radius: 2px;
    background: #838486;
}

.linked::before {
    top: -7px;
}

.linked::after {
    top: 1px;
}

.linked.tall::before {
    top: -16px;
}

.device-row.tall {
    height: 42px;
}

.step {
    width: 16px;
    height: 16px;
    margin-top: 9px;
    border-radius: 8px;
    background: #666868;
    color: #fff;
    font-size: 12px;
    text-align: center;
    line-height: 16px;
}

.select {
    position: relative;
    height: 30px;
}

.tall .select {
    height: 36px;
}

.select select {
    width: 100%;
    height: 100%;
    padding: 0 3px;
    appearance: none;
    background: #fff;
    border: 1px solid #dfdfdf;
    font-size: 11px;
    font-weight: bold;
}

.select.two select {
    padding-bottom: 12px;
}

.select::after {
    content: "";
    position: absolute;
    right: 10px;
    top: 10px;
    border: 6px solid transparent;
    border-top: 10px solid #838486;
    border-bottom: none;
}

.tall .select::after {
    top: 13px;
}

.select small {
    position: absolute;
    left: 4px;
    bottom: 3px;
    font-size: 9px;
}

.tall .select small {
    bottom: 5px;
}

.field {
    display: flex;
    align-items: center;
    height: 36px;
    padding: 0 0 0 8px;
}

.field label {
    width: 88px;
}

.field .num {
    width: 50px;
    margin-left: 6px;
    background: #dfdfdf;
}

.field .spin {
    margin: 0 5px 0 2px;
}

.field input[type="range"] {
    width: 81px;
    height: 25px;
    appearance: none;
    background: #dfdfdf;
}

.field input[type="range"]::-webkit-slider-thumb {
    appearance: none;
    width: 12px;
    height: 25px;
    background: linear-gradient(#b5b5b5 14px, #838486 14px);
    clip-path: polygon(42% 0, 50% 0, 50% 56%, 100% 96%, 0 96%, 42% 62%);
}

.field.disabled {
    align-items: flex-start;
    padding: 4px 0 0 5px;
    opacity: 0.5;
}

.disabled label {
    line-height: 11px;
}

.choices {
    display: flex;
    align-items: center;
    gap: 1px;
    height: 48px;
    padding-left: 8px;
}

.choices.orient {
    height: 45px;
    padding-bottom: 3px;
}

.choices span {
    width: 87px;
}

.choices button {
    width: 40px;
    height: 36px;
}

.choices .edge {
    border-right: 1px solid #dff3f7;
}

.choices svg {
    width: 22px;
    height: 22px;
}

.choices .rot svg {
    width: 26px;
    height: 20px;
    fill: none;
    stroke: currentColor;
    stroke-width: 1.5;
}

.rot {
    color: #838486;
}

.rot text {
    fill: currentColor;
    stroke: none;
    font-size: 13px;
    text-anchor: middle;
}

.r90 svg {
    transform: rotate(90deg);
}

.r180 svg {
    transform: rotate(180deg);
}

.r270 svg {
    transform: rotate(-90deg);
}

.checks {
    padding: 3px 5px;
}

.checks label {
    display: flex;
    align-items: center;
    gap: 4px;
    height: 33px;
}

.checks input {
    display: grid;
    place-items: center;
    width: 20px;
    height: 20px;
    appearance: none;
    border: 1px solid #838486;
    background: #fff;
}

.checks input:checked {
    background: #838486;
}

.checks input:checked::after {
    content: "";
    width: 9px;
    height: 5px;
    margin-bottom: 3px;
    border: solid #fff;
    border-width: 0 0 2px 2px;
    transform: rotate(-45deg);
}

/* scrollbars */
.hscroll {
    display: flex;
    align-items: center;
    height: 16px;
    background: #9fa0a2;
    border-bottom: 1px solid #494b4a;
}

.hscroll i,
.vscroll i {
    display: flex;
    align-items: center;
    justify-content: center;
    width: 16px;
    height: 16px;
    background: #494b4a;
}

.hscroll i::after,
.vscroll i::after {
    content: "";
    width: 10px;
    height: 10px;
    background: #9fa0a2;
    clip-path: polygon(100% 0, 0 50%, 100% 100%);
}

.hscroll .right::after {
    clip-path: polygon(0 0, 100% 50%, 0 100%);
}

.vscroll .up::after {
    clip-path: polygon(50% 0, 100% 100%, 0 100%);
}

.vscroll .down::after {
    clip-path: polygon(0 0, 100% 0, 50% 100%);
}

.hscroll b {
    width: 19.1%;
    height: 100%;
    margin-left: 34.3%;
    margin-right: auto;
    background: #494b4a;
}

.vscroll {
    display: grid;
    grid-template-rows: 16px 42fr 63px 58fr 16px;
    width: 16px;
    margin-bottom: 16px;
    background: #9fa0a2;
}

.vscroll b {
    grid-row: 3;
    background: #494b4a;
}

.vscroll .down {
    grid-row: 5;
}

/* icons cut by the window border */
.right-icons {
    display: flex;
    flex-direction: column;
    gap: 3px;
    width: 19px;
    overflow: hidden;
    color: #666868;
}

.right-icons button {
    flex: none;
    justify-content: flex-start;
    width: 34px;
    height: 30px;
    padding-left: 5px;
}

.right-icons svg {
    width: 22px;
    height: 22px;
}

.pix text {
    fill: #fff;
    font-size: 13px;
    font-weight: bold;
}

.right-icons .boxed {
    height: 24px;
    margin: 3px 0 3px 3px;
    padding-left: 2px;
    border: 1px solid #777;
    border-radius: 4px;
}

.right-icons .bottom {
    margin-top: auto;
    padding-bottom: 1px;
}

.bottom button {
    height: 24px;
}

.bottom .blue {
    color: #3a9bd5;
}

.bottom .sync {
    color: #157c8c;
}

.bottom svg {
    width: 18px;
    height: 18px;
}
```
